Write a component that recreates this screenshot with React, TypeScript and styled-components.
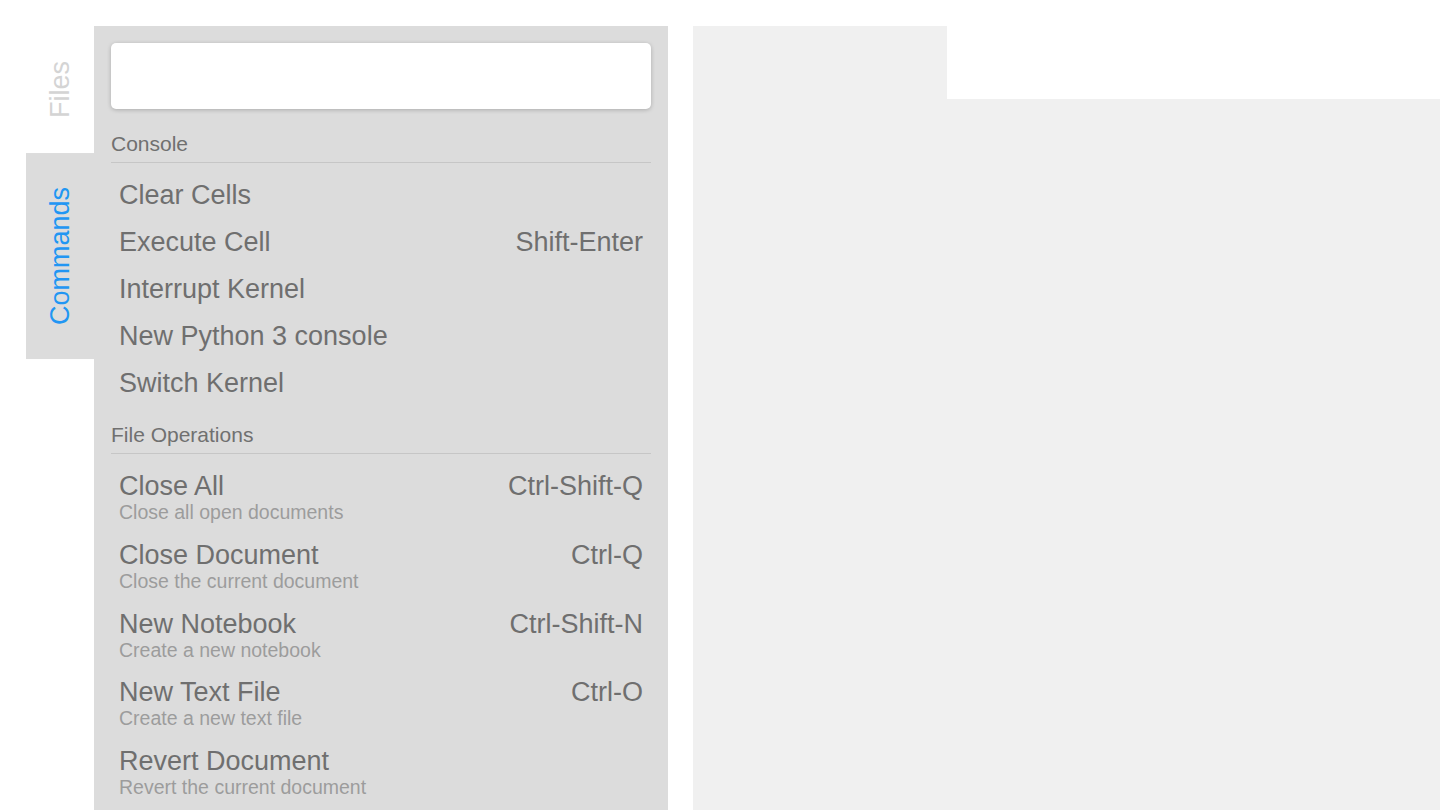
import React from "react";
import styled, { createGlobalStyle } from "styled-components";

const GlobalStyle = createGlobalStyle`
  html, body {
    margin: 0;
    padding: 0;
    background: #ffffff;
    font-family: "Liberation Sans", Arial, Helvetica, sans-serif;
    overflow: hidden;
  }
  * { box-sizing: border-box; }
`;

const Shell = styled.div`
  display: flex;
  align-items: stretch;
  height: 810px;
  padding: 26px 0 0 26px;
`;

const TabBar = styled.div`
  width: 68px;
  display: flex;
  flex-direction: column;
  flex-shrink: 0;
`;

const SideTab = styled.div<{ $active?: boolean }>`
  background: ${(p) => (p.$active ? "#dcdcdc" : "transparent")};
  color: ${(p) => (p.$active ? "#2196f3" : "#d4d4d4")};
  writing-mode: vertical-rl;
  transform: rotate(180deg);
  display: flex;
  align-items: center;
  justify-content: center;
  padding: ${(p) => (p.$active ? "34px 0" : "35px 0")};
  font-size: 27px;
  line-height: 68px;
  width: 68px;
`;

const Panel = styled.div`
  width: 574px;
  flex-shrink: 0;
  background: #dcdcdc;
  padding: 17px 17px 0 17px;
  display: flex;
  flex-direction: column;
  overflow: hidden;
`;

const SearchBox = styled.div`
  height: 66px;
  background: #ffffff;
  border-radius: 5px;
  box-shadow: 0 1px 4px rgba(0, 0, 0, 0.22);
  margin-bottom: 7px;
  flex-shrink: 0;
`;

const SectionHeader = styled.div`
  font-size: 21px;
  line-height: 26px;
  color: #707070;
  padding: 15px 0 5px 0;
  border-bottom: 1px solid #c6c6c6;
`;

const ItemList = styled.div`
  padding-top: 9px;
  display: flex;
  flex-direction: column;
`;

const Row = styled.div`
  display: flex;
  justify-content: space-between;
  align-items: flex-start;
  padding: 8px 8px;
  color: #6f6f6f;
`;

const TextCol = styled.div`
  display: flex;
  flex-direction: column;
`;

const Title = styled.div`
  font-size: 27px;
  line-height: 31px;
  white-space: nowrap;
`;

const Caption = styled.div`
  font-size: 19.5px;
  line-height: 21.75px;
  color: #9c9c9c;
  white-space: nowrap;
`;

const Shortcut = styled.div`
  font-size: 27px;
  line-height: 31px;
  white-space: nowrap;
`;

const Main = styled.div`
  flex: 1;
  margin-left: 25px;
  display: flex;
  flex-direction: column;
`;

const DockTabs = styled.div`
  display: flex;
  height: 73px;
  flex-shrink: 0;
`;

const DockTab = styled.div`
  width: 254px;
  background: #f0f0f0;
`;

const DockBody = styled.div`
  flex: 1;
  background: #f0f0f0;
`;

type Cmd = { title: string; caption?: string; shortcut?: string };

const consoleCmds: Cmd[] = [
  { title: "Clear Cells" },
  { title: "Execute Cell", shortcut: "Shift-Enter" },
  { title: "Interrupt Kernel" },
  { title: "New Python 3 console" },
  { title: "Switch Kernel" },
];

const fileCmds: Cmd[] = [
  { title: "Close All", caption: "Close all open documents", shortcut: "Ctrl-Shift-Q" },
  { title: "Close Document", caption: "Close the current document", shortcut: "Ctrl-Q" },
  { title: "New Notebook", caption: "Create a new notebook", shortcut: "Ctrl-Shift-N" },
  { title: "New Text File", caption: "Create a new text file", shortcut: "Ctrl-O" },
  { title: "Revert Document", caption: "Revert the current document" },
];

const Section = ({ name, items }: { name: string; items: Cmd[] }) => (
  <>
    <SectionHeader>{name}</SectionHeader>
    <ItemList>
      {items.map((c) => (
        <Row key={c.title}>
          <TextCol>
            <Title>{c.title}</Title>
            {c.caption && <Caption>{c.caption}</Caption>}
          </TextCol>
          {c.shortcut && <Shortcut>{c.shortcut}</Shortcut>}
        </Row>
      ))}
    </ItemList>
  </>
);

export default function App() {
  return (
    <>
      <GlobalStyle />
      <Shell>
        <TabBar>
          <SideTab>Files</SideTab>
          <SideTab $active>Commands</SideTab>
        </TabBar>
        <Panel>
          <SearchBox />
          <Section name="Console" items={consoleCmds} />
          <Section name="File Operations" items={fileCmds} />
        </Panel>
        <Main>
          <DockTabs>
            <DockTab />
          </DockTabs>
          <DockBody />
        </Main>
      </Shell>
    </>
  );
}
